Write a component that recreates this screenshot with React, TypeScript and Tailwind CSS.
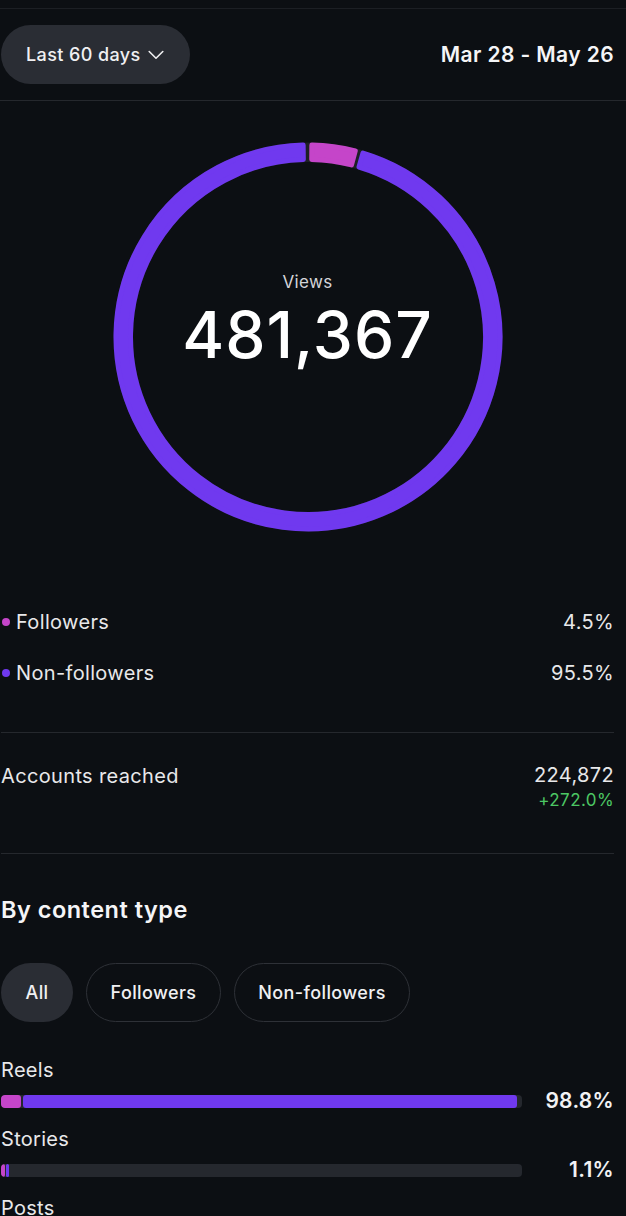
import React from "react";

const PURPLE = "#7039ef";
const PINK = "#c545c9";

function pt(cx: number, cy: number, r: number, aDeg: number) {
  const a = (aDeg * Math.PI) / 180;
  return [cx + r * Math.sin(a), cy - r * Math.cos(a)];
}

function sector(cx: number, cy: number, ri: number, ro: number, a1: number, a2: number, inset: number) {
  const rO = ro - inset;
  const rI = ri + inset;
  const dO = ((inset / rO) * 180) / Math.PI;
  const dI = ((inset / rI) * 180) / Math.PI;
  const [x1, y1] = pt(cx, cy, rO, a1 + dO);
  const [x2, y2] = pt(cx, cy, rO, a2 - dO);
  const [x3, y3] = pt(cx, cy, rI, a2 - dI);
  const [x4, y4] = pt(cx, cy, rI, a1 + dI);
  const large = a2 - a1 > 180 ? 1 : 0;
  return `M${x1} ${y1} A${rO} ${rO} 0 ${large} 1 ${x2} ${y2} L${x3} ${y3} A${rI} ${rI} 0 ${large} 0 ${x4} ${y4} Z`;
}

function Ring() {
  const cx = 195;
  const cy = 195;
  const ro = 194.5;
  const ri = 175;
  const inset = 2.5;
  return (
    <svg width="390" height="390" viewBox="0 0 390 390">
      <circle cx={cx} cy={cy} r={(ro + ri) / 2} fill="none" stroke="#1d2025" strokeWidth={ro - ri} />
      <path d={sector(cx, cy, ri, ro, 0.4, 15.0, inset)} fill={PINK} stroke={PINK} strokeWidth={inset * 2} strokeLinejoin="round" />
      <path d={sector(cx, cy, ri, ro, 15.9, 359.3, inset)} fill={PURPLE} stroke={PURPLE} strokeWidth={inset * 2} strokeLinejoin="round" />
    </svg>
  );
}

function Bar({ label, pink, purpleStart, purpleEnd, value }: { label: string; pink: number; purpleStart: number; purpleEnd: number; value: string }) {
  return (
    <div className="mt-[7px]">
      <div className="text-[20px] leading-[26px] tracking-[0.3px] text-[#e8e8ea]">{label}</div>
      <div className="flex h-[36px] items-center">
        <div className="relative h-[13px] w-[521px] overflow-hidden rounded-[4px] bg-[#25282e]">
          <div className="absolute left-0 top-0 h-full rounded-[3px]" style={{ width: pink, background: PINK }} />
          <div
            className="absolute top-0 h-full rounded-[3px]"
            style={{ left: purpleStart, width: purpleEnd - purpleStart, background: PURPLE }}
          />
        </div>
        <div className="flex-1 text-right text-[21px] font-semibold tracking-[0.3px] text-[#f2f2f4]">{value}</div>
      </div>
    </div>
  );
}

export default function App() {
  return (
    <div
      className="min-h-[1216px] w-[626px] overflow-hidden bg-[#0c0f13] text-white"
      style={{ fontFamily: "Inter, 'Noto Sans', sans-serif" }}
    >
      <div className="h-[9px] border-b border-[#1c1f24]" />
      <div className="flex h-[92px] items-center justify-between border-b border-[#25282d] pl-[1px] pr-[12px]">
        <div className="flex h-[59px] w-[189px] items-center rounded-full bg-[#2a2d34] pl-[25px]">
          <span className="text-[18px] font-medium tracking-[0.4px] text-[#f0f0f2]">Last 60 days</span>
          <svg className="ml-[7px] mt-[1px]" width="16" height="10" viewBox="0 0 16 10">
            <path d="M1.2 1.5 L8 8.2 L14.8 1.5" fill="none" stroke="#f0f0f2" strokeWidth="1.6" strokeLinecap="round" strokeLinejoin="round" />
          </svg>
        </div>
        <div className="text-[21px] font-semibold tracking-[0.4px] text-[#f5f5f7]">Mar 28 - May 26</div>
      </div>

      <div className="pl-[1px] pr-[12px]">
        <div className="mt-[41px] flex justify-center">
          <div className="relative h-[390px] w-[390px]">
            <Ring />
            <div className="absolute inset-0 flex flex-col items-center justify-center">
              <div className="mt-[-33px] text-[17px] leading-[22px] tracking-[0.3px] text-[#d4d4d8]">Views</div>
              <div className="mt-[7px] text-[64px] font-medium leading-[70px] tracking-[1px] text-white">481,367</div>
            </div>
          </div>
        </div>

        <div className="mt-[64px]">
          <div className="flex h-[51px] items-center justify-between">
            <div className="flex items-center">
              <span className="ml-[1px] h-[8px] w-[8px] rounded-full" style={{ background: PINK }} />
              <span className="ml-[6px] text-[20px] tracking-[0.35px] text-[#e8e8ea]">Followers</span>
            </div>
            <span className="text-[20px] tracking-[0.35px] text-[#e8e8ea]">4.5%</span>
          </div>
          <div className="flex h-[51px] items-center justify-between">
            <div className="flex items-center">
              <span className="ml-[1px] h-[8px] w-[8px] rounded-full" style={{ background: PURPLE }} />
              <span className="ml-[6px] text-[20px] tracking-[0.35px] text-[#e8e8ea]">Non-followers</span>
            </div>
            <span className="text-[20px] tracking-[0.35px] text-[#e8e8ea]">95.5%</span>
          </div>
        </div>

        <div className="mt-[34px] border-t border-[#25282d]" />

        <div className="flex justify-between pb-[40px] pt-[30px]">
          <div className="text-[20px] leading-[26px] tracking-[0.35px] text-[#e8e8ea]">Accounts reached</div>
          <div className="flex flex-col items-end">
            <div className="text-[20px] leading-[24px] tracking-[0.35px] text-[#e8e8ea]">224,872</div>
            <div className="text-[17px] leading-[26px] tracking-[0.4px] text-[#4cc764]">+272.0%</div>
          </div>
        </div>

        <div className="border-t border-[#25282d]" />

        <div className="mt-[41px] text-[23.5px] font-semibold leading-[30px] tracking-[0.5px] text-[#f5f5f7]">By content type</div>

        <div className="mt-[38px] flex gap-[13px]">
          <div className="flex h-[59px] w-[72px] items-center justify-center rounded-full bg-[#2a2d34] text-[18px] font-medium tracking-[0.4px] text-[#f0f0f2]">
            All
          </div>
          <div className="flex h-[59px] w-[135px] items-center justify-center rounded-full border border-[#2e3137] text-[18px] font-medium tracking-[0.4px] text-[#f0f0f2]">
            Followers
          </div>
          <div className="flex h-[59px] w-[176px] items-center justify-center rounded-full border border-[#2e3137] text-[18px] font-medium tracking-[0.4px] text-[#f0f0f2]">
            Non-followers
          </div>
        </div>

        <div className="mt-[35px]">
          <Bar label="Reels" pink={20} purpleStart={22} purpleEnd={516} value="98.8%" />
          <Bar label="Stories" pink={4} purpleStart={5} purpleEnd={8} value="1.1%" />
          <div className="mt-[7px] text-[20px] leading-[26px] tracking-[0.3px] text-[#e8e8ea]">Posts</div>
        </div>
      </div>
    </div>
  );
}
